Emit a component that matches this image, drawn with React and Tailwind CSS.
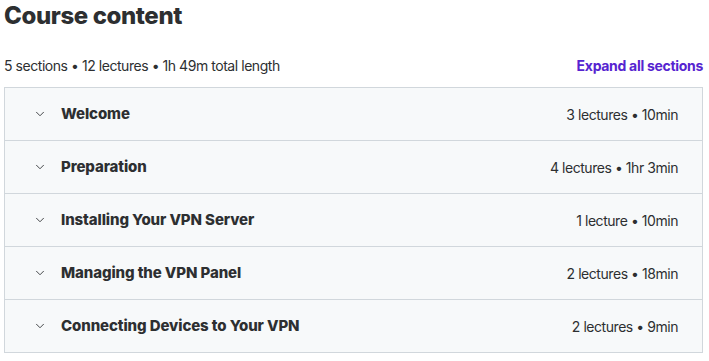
import { ChevronDown } from "lucide-react";

const sections = [
  { title: "Welcome", meta: "3 lectures • 10min" },
  { title: "Preparation", meta: "4 lectures • 1hr 3min" },
  { title: "Installing Your VPN Server", meta: "1 lecture • 10min" },
  { title: "Managing the VPN Panel", meta: "2 lectures • 18min" },
  { title: "Connecting Devices to Your VPN", meta: "2 lectures • 9min" },
];

export default function App() {
  return (
    <div
      className="w-[709px] h-[361px] bg-white pl-[4px] pr-[6px] text-[#2d2f31]"
      style={{ fontFamily: "Inter, 'Noto Sans', sans-serif" }}
    >
      <h2 className="text-[24px] leading-[32px] font-extrabold tracking-[-0.4px]">Course content</h2>
      <div className="mt-[24px] flex items-center justify-between text-[14px] leading-[20px]">
        <span className="tracking-[-0.45px]">5 sections • 12 lectures • 1h 49m total length</span>
        <button className="font-bold tracking-[-0.3px] text-[#5624d0]">Expand all sections</button>
      </div>
      <div className="mt-[11px] border border-[#d1d7dc]">
        {sections.map((s, i) => (
          <div
            key={s.title}
            className={`flex items-center bg-[#f7f9fa] pl-[28px] pr-[24px] ${i > 0 ? "h-[53px] border-t border-[#d1d7dc]" : "h-[52px]"}`}
          >
            <ChevronDown size={14} strokeWidth={1.5} className="mr-[14px]" />
            <span className="flex-1 text-[15px] font-extrabold tracking-[-0.1px]">{s.title}</span>
            <span className="text-[14px] tracking-[-0.45px]">{s.meta}</span>
          </div>
        ))}
      </div>
    </div>
  );
}
